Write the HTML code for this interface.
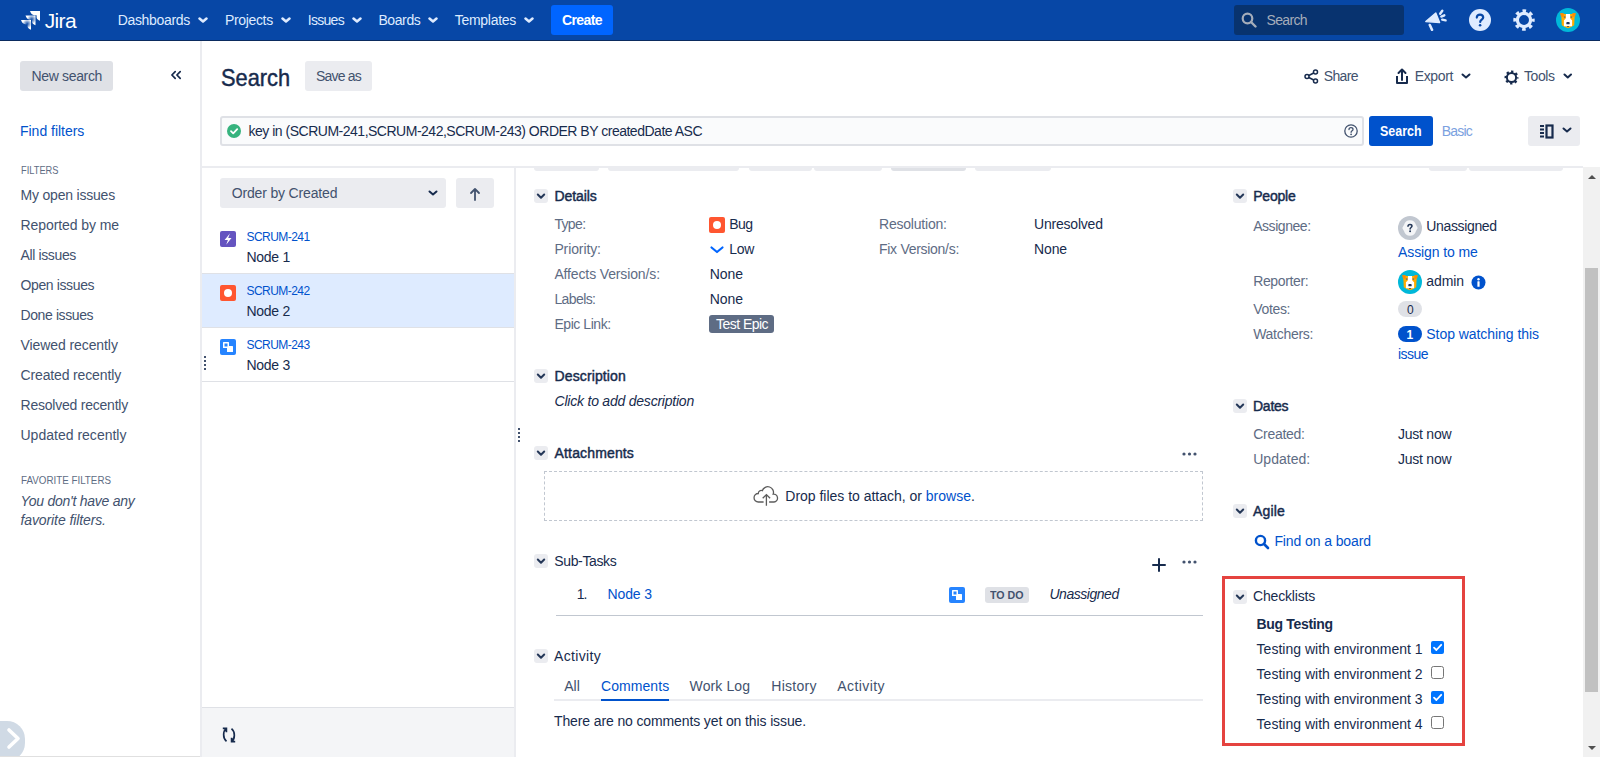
<!DOCTYPE html><html><head><meta charset="utf-8"><style>
html,body{margin:0;padding:0;width:1600px;height:757px;overflow:hidden;background:#fff;position:relative;font-family:"Liberation Sans", sans-serif}
.t{position:absolute;line-height:1;white-space:nowrap}
</style></head><body>
<div style="position:absolute;left:0px;top:0px;width:1600px;height:40px;background:#0747a6;border-radius:0px;"></div>
<div style="position:absolute;left:0px;top:40px;width:1600px;height:1px;background:#0b2b5e;border-radius:0px;"></div>
<svg style="position:absolute;left:20px;top:10px" width="21" height="22" viewBox="0 0 21 22">
<defs><radialGradient id="rg2" gradientUnits="userSpaceOnUse" cx="16.2" cy="4.8" r="4.6"><stop offset="0.1" stop-color="#fff" stop-opacity="0.15"/><stop offset="1" stop-color="#fff" stop-opacity="1"/></radialGradient>
<radialGradient id="rg3" gradientUnits="userSpaceOnUse" cx="16.2" cy="4.8" r="4.6"><stop offset="0.1" stop-color="#fff" stop-opacity="0.15"/><stop offset="1" stop-color="#fff" stop-opacity="1"/></radialGradient></defs>
<path transform="translate(-9 9)" d="M10 1.1 H20 V10.7 C18.5 10.3 16.8 9.3 16.6 7.5 V5.6 C16.6 5.4 16.4 5.2 16.2 5.2 H14.2 C12.5 5.2 10.5 3.3 10 1.1 Z" fill="url(#rg3)"/>
<path transform="translate(-4.5 4.5)" d="M10 1.1 H20 V10.7 C18.5 10.3 16.8 9.3 16.6 7.5 V5.6 C16.6 5.4 16.4 5.2 16.2 5.2 H14.2 C12.5 5.2 10.5 3.3 10 1.1 Z" fill="url(#rg2)"/>
<path d="M10 1.1 H20 V10.7 C18.5 10.3 16.8 9.3 16.6 7.5 V5.6 C16.6 5.4 16.4 5.2 16.2 5.2 H14.2 C12.5 5.2 10.5 3.3 10 1.1 Z" fill="#fff"/>
</svg>
<svg style="position:absolute;left:198px;top:16.5px" width="10" height="7.0" viewBox="0 0 10 7.0"><path d="M1.5 1.5 L5.0 4.5 L8.5 1.5" fill="none" stroke="#deebff" stroke-width="2.5" stroke-linecap="round" stroke-linejoin="round"/></svg>
<svg style="position:absolute;left:281px;top:16.5px" width="10" height="7.0" viewBox="0 0 10 7.0"><path d="M1.5 1.5 L5.0 4.5 L8.5 1.5" fill="none" stroke="#deebff" stroke-width="2.5" stroke-linecap="round" stroke-linejoin="round"/></svg>
<svg style="position:absolute;left:352px;top:16.5px" width="10" height="7.0" viewBox="0 0 10 7.0"><path d="M1.5 1.5 L5.0 4.5 L8.5 1.5" fill="none" stroke="#deebff" stroke-width="2.5" stroke-linecap="round" stroke-linejoin="round"/></svg>
<svg style="position:absolute;left:428px;top:16.5px" width="10" height="7.0" viewBox="0 0 10 7.0"><path d="M1.5 1.5 L5.0 4.5 L8.5 1.5" fill="none" stroke="#deebff" stroke-width="2.5" stroke-linecap="round" stroke-linejoin="round"/></svg>
<svg style="position:absolute;left:524px;top:16.5px" width="10" height="7.0" viewBox="0 0 10 7.0"><path d="M1.5 1.5 L5.0 4.5 L8.5 1.5" fill="none" stroke="#deebff" stroke-width="2.5" stroke-linecap="round" stroke-linejoin="round"/></svg>
<div style="position:absolute;left:551px;top:5px;width:62px;height:30px;background:#0065ff;border-radius:3px;"></div>
<div style="position:absolute;left:1234px;top:5px;width:170px;height:30px;background:#08336f;border-radius:3px;"></div>
<svg style="position:absolute;left:1241px;top:12px" width="16" height="16" viewBox="0 0 16 16"><circle cx="6.5" cy="6.5" r="4.8" fill="none" stroke="#a5adba" stroke-width="2.2"/><path d="M10 10 L14.5 14.5" stroke="#a5adba" stroke-width="2.4" stroke-linecap="round"/></svg>
<svg style="position:absolute;left:1424px;top:9px" width="24" height="22" viewBox="0 0 24 22"><path d="M1.8 12.6 L11.8 4 L15.6 13.6 Z" fill="#deebff" stroke="#deebff" stroke-width="1.4" stroke-linejoin="round"/>
<path d="M5.8 16 L8 20.8" stroke="#deebff" stroke-width="2.6" stroke-linecap="round"/>
<path d="M16.2 4.8 L18.3 1.8" stroke="#deebff" stroke-width="2.4" stroke-linecap="round"/><path d="M17.3 7.6 L20.3 6.3" stroke="#deebff" stroke-width="2.4" stroke-linecap="round"/><path d="M18.2 10.6 L21.6 11.4" stroke="#deebff" stroke-width="2.4" stroke-linecap="round"/></svg>
<svg style="position:absolute;left:1469px;top:9px" width="22" height="22" viewBox="0 0 22 22"><circle cx="11" cy="11" r="11" fill="#deebff"/><path d="M7.8 8.6 C7.8 6.6 9.2 5.6 11 5.6 C12.9 5.6 14.2 6.8 14.2 8.4 C14.2 10.6 11.2 10.6 11.2 13" fill="none" stroke="#0747a6" stroke-width="2.2" stroke-linecap="round"/><circle cx="11.1" cy="16.2" r="1.3" fill="#0747a6"/></svg>
<svg style="position:absolute;left:1513px;top:9px" width="22" height="22" viewBox="0 0 22 22"><circle cx="11" cy="11" r="6.6" fill="none" stroke="#deebff" stroke-width="3.1999999999999993"/><circle cx="11" cy="11" r="8.95" fill="none" stroke="#deebff" stroke-width="3.5" stroke-dasharray="3.515 3.515" stroke-dashoffset="1.757"/></svg>
<svg style="position:absolute;left:1556px;top:8px" width="24" height="24" viewBox="0 0 24 24"><circle cx="12" cy="12" r="12" fill="#00b8d9"/>
<path d="M5.2 6 H18.8 L18.2 17.2 L15.2 19 Q12 21.3 8.8 19 L5.8 17.2 Z" fill="#ffab00"/>
<path d="M4 5.2 L7.6 5 L7.6 9 L5 8.6 Z" fill="#ff8b00"/><path d="M20 5.2 L16.4 5 L16.4 9 L19 8.6 Z" fill="#ff8b00"/>
<path d="M10 6 H14 L14.4 10.8 L16.1 12.3 V18.2 H7.9 V12.3 L9.6 10.8 Z" fill="#fff"/>
<rect x="7.9" y="8.2" width="1.6" height="1.8" fill="#8a7a55"/><rect x="14.5" y="8.2" width="1.6" height="1.8" fill="#8a7a55"/>
<rect x="10.3" y="14.1" width="3.4" height="2.2" rx="0.9" fill="#253858"/><rect x="11.2" y="18" width="1.6" height="0.9" fill="#253858"/></svg>
<div style="position:absolute;left:200px;top:41px;width:2px;height:716px;background:#ebecf0;border-radius:0px;"></div>
<div style="position:absolute;left:20px;top:61px;width:93px;height:30px;background:#dfe1e6;border-radius:3px;"></div>
<svg style="position:absolute;left:170px;top:69px" width="13" height="12" viewBox="0 0 13 12"><path d="M5.2 2.7 L1.9 6 L5.2 9.3 M10.2 2.7 L6.9 6 L10.2 9.3" fill="none" stroke="#172b4d" stroke-width="1.7" stroke-linecap="round" stroke-linejoin="round"/></svg>
<div style="position:absolute;left:-20px;top:721px;width:45px;height:40px;background:#d0dae5;border-radius:18px;"></div>
<svg style="position:absolute;left:5px;top:726px" width="18" height="26" viewBox="0 0 18 26"><path d="M4 4 L13 12.5 L4 21" fill="none" stroke="#fff" stroke-width="3.6" stroke-linecap="round" stroke-linejoin="round"/></svg>
<div style="position:absolute;left:0px;top:756px;width:200px;height:1px;background:#e0e0e0;border-radius:0px;"></div>
<div style="position:absolute;left:305px;top:61px;width:67px;height:30px;background:#ebecf0;border-radius:3px;"></div>
<svg style="position:absolute;left:1304px;top:69px" width="15" height="15" viewBox="0 0 15 15"><circle cx="11.5" cy="3" r="2" fill="none" stroke="#172b4d" stroke-width="1.5"/><circle cx="3" cy="7.5" r="2" fill="none" stroke="#172b4d" stroke-width="1.5"/><circle cx="11.5" cy="12" r="2" fill="none" stroke="#172b4d" stroke-width="1.5"/><path d="M4.8 6.5 L9.7 4 M4.8 8.5 L9.7 11" stroke="#172b4d" stroke-width="1.5"/></svg>
<svg style="position:absolute;left:1395px;top:68px" width="14" height="17" viewBox="0 0 14 17"><path d="M2 8 V15 H12 V8" fill="none" stroke="#172b4d" stroke-width="2" stroke-linejoin="round"/><path d="M7 12 V2 M3.5 5 L7 1.5 L10.5 5" fill="none" stroke="#172b4d" stroke-width="2" stroke-linecap="round" stroke-linejoin="round"/></svg>
<svg style="position:absolute;left:1461px;top:73px" width="10" height="7" viewBox="0 0 10 7"><path d="M1.5 1.5 L5.0 4.5 L8.5 1.5" fill="none" stroke="#172b4d" stroke-width="2" stroke-linecap="round" stroke-linejoin="round"/></svg>
<svg style="position:absolute;left:1504px;top:70px" width="15" height="15" viewBox="0 0 15 15"><circle cx="7.5" cy="7.5" r="4.6" fill="none" stroke="#172b4d" stroke-width="1.9999999999999996"/><circle cx="7.5" cy="7.5" r="5.8" fill="none" stroke="#172b4d" stroke-width="2.4000000000000004" stroke-dasharray="2.278 2.278" stroke-dashoffset="1.139"/></svg>
<svg style="position:absolute;left:1562.5px;top:73px" width="9.5" height="7" viewBox="0 0 9.5 7"><path d="M1.5 1.5 L4.75 4.5 L8.0 1.5" fill="none" stroke="#172b4d" stroke-width="2" stroke-linecap="round" stroke-linejoin="round"/></svg>
<div style="position:absolute;left:220px;top:116px;width:1144px;height:30px;background:#fafbfc;border-radius:3px;box-sizing:border-box;border:2px solid #dfe1e6"></div>
<svg style="position:absolute;left:227px;top:124px" width="14" height="14" viewBox="0 0 14 14"><circle cx="7" cy="7" r="7" fill="#36b37e"/><path d="M4 7.2 L6.2 9.3 L10.2 5.2" fill="none" stroke="#fff" stroke-width="1.8" stroke-linecap="round" stroke-linejoin="round"/></svg>
<svg style="position:absolute;left:1344px;top:124px" width="14" height="14" viewBox="0 0 14 14"><circle cx="7" cy="7" r="6.2" fill="none" stroke="#42526e" stroke-width="1.3"/><path d="M5 5.6 C5 4.3 5.9 3.7 7 3.7 C8.2 3.7 9 4.4 9 5.4 C9 6.8 7.1 6.8 7.1 8.3" fill="none" stroke="#42526e" stroke-width="1.3" stroke-linecap="round"/><circle cx="7.1" cy="10.3" r="0.9" fill="#42526e"/></svg>
<div style="position:absolute;left:1369px;top:116px;width:64px;height:30px;background:#0052cc;border-radius:3px;"></div>
<div style="position:absolute;left:1528px;top:116px;width:52px;height:30px;background:#ebecf0;border-radius:3px;"></div>
<svg style="position:absolute;left:1539px;top:124px" width="16" height="15" viewBox="0 0 16 15"><path d="M1 2 H5 M1 5.5 H5 M1 9 H5 M1 12.5 H5" stroke="#172b4d" stroke-width="1.8"/><rect x="7.5" y="1.5" width="6" height="12" fill="none" stroke="#172b4d" stroke-width="2.2"/></svg>
<svg style="position:absolute;left:1562px;top:127px" width="10" height="7" viewBox="0 0 10 7"><path d="M1.5 1.5 L5.0 4.5 L8.5 1.5" fill="none" stroke="#172b4d" stroke-width="2" stroke-linecap="round" stroke-linejoin="round"/></svg>
<div style="position:absolute;left:202px;top:166px;width:1381px;height:2px;background:#ebecf0;border-radius:0px;"></div>
<div style="position:absolute;left:220px;top:178px;width:226px;height:30px;background:#ebecf0;border-radius:3px;"></div>
<svg style="position:absolute;left:428px;top:189.5px" width="10" height="7.0" viewBox="0 0 10 7.0"><path d="M1.5 1.5 L5.0 4.5 L8.5 1.5" fill="none" stroke="#172b4d" stroke-width="2" stroke-linecap="round" stroke-linejoin="round"/></svg>
<div style="position:absolute;left:456px;top:178px;width:38px;height:30px;background:#ebecf0;border-radius:3px;"></div>
<svg style="position:absolute;left:468px;top:187px" width="14" height="14" viewBox="0 0 14 14"><path d="M7 13 V2 M3 6 L7 2 L11 6" fill="none" stroke="#42526e" stroke-width="1.8" stroke-linecap="round" stroke-linejoin="round"/></svg>
<div style="position:absolute;left:202px;top:273px;width:312px;height:1px;background:#dfe1e6;border-radius:0px;"></div>
<div style="position:absolute;left:202px;top:274px;width:312px;height:53px;background:#deebff;border-radius:0px;"></div>
<div style="position:absolute;left:202px;top:327px;width:312px;height:1px;background:#dfe1e6;border-radius:0px;"></div>
<div style="position:absolute;left:202px;top:381px;width:312px;height:1px;background:#dfe1e6;border-radius:0px;"></div>
<svg style="position:absolute;left:220px;top:231px" width="16" height="16" viewBox="0 0 16 16"><rect width="16" height="16" rx="2" fill="#6554c0"/><path d="M9.9 2.4 L4.6 9.1 H7.9 L6.2 13.8 L11.5 7 H8.2 Z" fill="#fff"/></svg>
<svg style="position:absolute;left:220px;top:285px" width="16" height="16" viewBox="0 0 16 16"><rect width="16" height="16" rx="2" fill="#ff5630"/><circle cx="8" cy="8" r="4" fill="#fff"/></svg>
<svg style="position:absolute;left:220px;top:339px" width="16" height="16" viewBox="0 0 16 16"><rect width="16" height="16" rx="2" fill="#2684ff"/><rect x="3" y="3" width="6" height="6" rx="0.5" fill="#fff"/><rect x="7" y="7" width="6" height="6" rx="0.5" fill="#fff"/><rect x="4.5" y="4.5" width="3" height="3" fill="#2684ff"/></svg>
<div style="position:absolute;left:204px;top:356px;width:2px;height:2px;background:#42526e;border-radius:0px;"></div>
<div style="position:absolute;left:204px;top:360px;width:2px;height:2px;background:#42526e;border-radius:0px;"></div>
<div style="position:absolute;left:204px;top:364px;width:2px;height:2px;background:#42526e;border-radius:0px;"></div>
<div style="position:absolute;left:204px;top:368px;width:2px;height:2px;background:#42526e;border-radius:0px;"></div>
<div style="position:absolute;left:514px;top:167px;width:2px;height:590px;background:#ebecf0;border-radius:0px;"></div>
<div style="position:absolute;left:518px;top:428px;width:2px;height:2px;background:#42526e;border-radius:0px;"></div>
<div style="position:absolute;left:518px;top:432px;width:2px;height:2px;background:#42526e;border-radius:0px;"></div>
<div style="position:absolute;left:518px;top:436px;width:2px;height:2px;background:#42526e;border-radius:0px;"></div>
<div style="position:absolute;left:518px;top:440px;width:2px;height:2px;background:#42526e;border-radius:0px;"></div>
<div style="position:absolute;left:202px;top:707px;width:312px;height:1px;background:#dfe1e6;border-radius:0px;"></div>
<div style="position:absolute;left:202px;top:708px;width:312px;height:49px;background:#f4f5f7;border-radius:0px;"></div>
<svg style="position:absolute;left:221px;top:727px" width="16" height="16" viewBox="0 0 16 16"><path d="M5.3 1.8 C2 4 1.5 11 5.5 14.3 M1.8 1.4 H5.4 V5.2" fill="none" stroke="#172b4d" stroke-width="1.7" stroke-linejoin="miter"/><path d="M10.7 14.2 C14 12 14.5 5 10.5 1.7 M14.2 14.6 H10.6 V10.8" fill="none" stroke="#172b4d" stroke-width="1.7" stroke-linejoin="miter"/></svg>
<div style="position:absolute;left:534px;top:163px;width:65px;height:8px;background:#ebecf0;border-radius:3px;"></div>
<div style="position:absolute;left:608px;top:163px;width:131px;height:8px;background:#ebecf0;border-radius:3px;"></div>
<div style="position:absolute;left:749px;top:163px;width:63px;height:8px;background:#ebecf0;border-radius:3px;"></div>
<div style="position:absolute;left:814px;top:163px;width:68px;height:8px;background:#ebecf0;border-radius:3px;"></div>
<div style="position:absolute;left:891px;top:163px;width:75px;height:8px;background:#dfe1e6;border-radius:3px;"></div>
<div style="position:absolute;left:975px;top:163px;width:76px;height:8px;background:#ebecf0;border-radius:3px;"></div>
<div style="position:absolute;left:1429px;top:163px;width:38px;height:8px;background:#ebecf0;border-radius:3px;"></div>
<div style="position:absolute;left:1469px;top:163px;width:94px;height:8px;background:#ebecf0;border-radius:3px;"></div>
<div style="position:absolute;left:202px;top:166px;width:1381px;height:2px;background:#ebecf0;border-radius:0px;"></div>
<div style="position:absolute;left:202px;top:163px;width:1398px;height:3px;background:#fff;border-radius:0px;"></div>
<div style="position:absolute;left:534px;top:189px;width:14px;height:14px;background:#ebecf0;border-radius:3px;"></div>
<svg style="position:absolute;left:534px;top:189px" width="14" height="14" viewBox="0 0 14 14"><path d="M3.8 5.5 L7 8.7 L10.2 5.5" fill="none" stroke="#253858" stroke-width="2" stroke-linecap="round" stroke-linejoin="round"/></svg>
<svg style="position:absolute;left:709px;top:217px" width="16" height="16" viewBox="0 0 16 16"><rect width="16" height="16" rx="2" fill="#ff5630"/><circle cx="8" cy="8" r="4" fill="#fff"/></svg>
<svg style="position:absolute;left:709px;top:245px" width="16" height="10" viewBox="0 0 16 10"><path d="M2.5 2.5 L8 7 L13.5 2.5" fill="none" stroke="#0065ff" stroke-width="2.2" stroke-linecap="round" stroke-linejoin="round"/></svg>
<div style="position:absolute;left:709px;top:315px;width:65px;height:18px;background:#5e6c84;border-radius:3px;"></div>
<div style="position:absolute;left:534px;top:369px;width:14px;height:14px;background:#ebecf0;border-radius:3px;"></div>
<svg style="position:absolute;left:534px;top:369px" width="14" height="14" viewBox="0 0 14 14"><path d="M3.8 5.5 L7 8.7 L10.2 5.5" fill="none" stroke="#253858" stroke-width="2" stroke-linecap="round" stroke-linejoin="round"/></svg>
<div style="position:absolute;left:534px;top:446px;width:14px;height:14px;background:#ebecf0;border-radius:3px;"></div>
<svg style="position:absolute;left:534px;top:446px" width="14" height="14" viewBox="0 0 14 14"><path d="M3.8 5.5 L7 8.7 L10.2 5.5" fill="none" stroke="#253858" stroke-width="2" stroke-linecap="round" stroke-linejoin="round"/></svg>
<svg style="position:absolute;left:1182px;top:451px" width="16" height="6" viewBox="0 0 16 6"><circle cx="2" cy="3" r="1.6" fill="#42526e"/><circle cx="7.5" cy="3" r="1.6" fill="#42526e"/><circle cx="13" cy="3" r="1.6" fill="#42526e"/></svg>
<div style="position:absolute;left:544px;top:471px;width:659px;height:50px;background:transparent;border-radius:0px;box-sizing:border-box;border:1px dashed #c1c7d0"></div>
<svg style="position:absolute;left:753px;top:485px" width="27" height="22" viewBox="0 0 27 22"><path d="M10.6 17 H5.3 A4.25 4.25 0 0 1 5.3 8.5 A3 3 0 0 1 9.4 5.6 A5.6 5.6 0 0 1 20.2 9.2 A3.9 3.9 0 0 1 21 17 H16.1" fill="none" stroke="#5c5c5c" stroke-width="1.3"/><path d="M13.4 20.8 V9.8 M9.7 13.3 L13.4 9.6 L17.1 13.3" fill="none" stroke="#5c5c5c" stroke-width="1.3" stroke-linejoin="miter"/></svg>
<div style="position:absolute;left:534px;top:554px;width:14px;height:14px;background:#ebecf0;border-radius:3px;"></div>
<svg style="position:absolute;left:534px;top:554px" width="14" height="14" viewBox="0 0 14 14"><path d="M3.8 5.5 L7 8.7 L10.2 5.5" fill="none" stroke="#253858" stroke-width="2" stroke-linecap="round" stroke-linejoin="round"/></svg>
<svg style="position:absolute;left:1151px;top:557px" width="16" height="16" viewBox="0 0 16 16"><path d="M8 2 V14 M2 8 H14" stroke="#172b4d" stroke-width="2" stroke-linecap="round"/></svg>
<svg style="position:absolute;left:1182px;top:559px" width="16" height="6" viewBox="0 0 16 6"><circle cx="2" cy="3" r="1.6" fill="#42526e"/><circle cx="7.5" cy="3" r="1.6" fill="#42526e"/><circle cx="13" cy="3" r="1.6" fill="#42526e"/></svg>
<svg style="position:absolute;left:949px;top:587px" width="16" height="16" viewBox="0 0 16 16"><rect width="16" height="16" rx="2" fill="#2684ff"/><rect x="3" y="3" width="6" height="6" rx="0.5" fill="#fff"/><rect x="7" y="7" width="6" height="6" rx="0.5" fill="#fff"/><rect x="4.5" y="4.5" width="3" height="3" fill="#2684ff"/></svg>
<div style="position:absolute;left:985px;top:587px;width:44px;height:16px;background:#dfe1e6;border-radius:3px;"></div>
<div style="position:absolute;left:556px;top:615px;width:647px;height:1px;background:#c1c7d0;border-radius:0px;"></div>
<div style="position:absolute;left:534px;top:649px;width:14px;height:14px;background:#ebecf0;border-radius:3px;"></div>
<svg style="position:absolute;left:534px;top:649px" width="14" height="14" viewBox="0 0 14 14"><path d="M3.8 5.5 L7 8.7 L10.2 5.5" fill="none" stroke="#253858" stroke-width="2" stroke-linecap="round" stroke-linejoin="round"/></svg>
<div style="position:absolute;left:554px;top:699px;width:649px;height:2px;background:#ebecf0;border-radius:0px;"></div>
<div style="position:absolute;left:601px;top:699px;width:68px;height:2px;background:#0052cc;border-radius:0px;"></div>
<div style="position:absolute;left:1233px;top:189px;width:14px;height:14px;background:#ebecf0;border-radius:3px;"></div>
<svg style="position:absolute;left:1233px;top:189px" width="14" height="14" viewBox="0 0 14 14"><path d="M3.8 5.5 L7 8.7 L10.2 5.5" fill="none" stroke="#253858" stroke-width="2" stroke-linecap="round" stroke-linejoin="round"/></svg>
<svg style="position:absolute;left:1398px;top:216px" width="24" height="24" viewBox="0 0 24 24"><circle cx="12" cy="12" r="12" fill="#c1c7d0"/><path d="M12 4.2 C15.2 4.2 17.3 6.2 17.9 8.8 L19.7 12 L17.9 15.2 C17.3 17.8 15.2 19.8 12 19.8 C8.8 19.8 6.7 17.8 6.1 15.2 L4.3 12 L6.1 8.8 C6.7 6.2 8.8 4.2 12 4.2Z" fill="#f4f5f7"/><path d="M10 10.2 C10 9 10.9 8.4 12 8.4 C13.2 8.4 14 9.1 14 10.1 C14 11.5 12.1 11.5 12.1 13" fill="none" stroke="#253858" stroke-width="1.5" stroke-linecap="round"/><circle cx="12.1" cy="15.3" r="0.95" fill="#253858"/></svg>
<svg style="position:absolute;left:1398px;top:270px" width="24" height="24" viewBox="0 0 24 24"><circle cx="12" cy="12" r="12" fill="#00b8d9"/>
<path d="M5.2 6 H18.8 L18.2 17.2 L15.2 19 Q12 21.3 8.8 19 L5.8 17.2 Z" fill="#ffab00"/>
<path d="M4 5.2 L7.6 5 L7.6 9 L5 8.6 Z" fill="#ff8b00"/><path d="M20 5.2 L16.4 5 L16.4 9 L19 8.6 Z" fill="#ff8b00"/>
<path d="M10 6 H14 L14.4 10.8 L16.1 12.3 V18.2 H7.9 V12.3 L9.6 10.8 Z" fill="#fff"/>
<rect x="7.9" y="8.2" width="1.6" height="1.8" fill="#8a7a55"/><rect x="14.5" y="8.2" width="1.6" height="1.8" fill="#8a7a55"/>
<rect x="10.3" y="14.1" width="3.4" height="2.2" rx="0.9" fill="#253858"/><rect x="11.2" y="18" width="1.6" height="0.9" fill="#253858"/></svg>
<svg style="position:absolute;left:1471px;top:275px" width="15" height="15" viewBox="0 0 15 15"><circle cx="7.5" cy="7.5" r="7" fill="#0052cc"/><circle cx="7.5" cy="4.3" r="1.2" fill="#fff"/><rect x="6.4" y="6.3" width="2.2" height="5.5" rx="0.5" fill="#fff"/></svg>
<div style="position:absolute;left:1398px;top:301px;width:24px;height:16px;background:#dfe1e6;border-radius:8px;"></div>
<div style="position:absolute;left:1398px;top:326px;width:24px;height:16px;background:#0052cc;border-radius:8px;"></div>
<div style="position:absolute;left:1233px;top:399px;width:14px;height:14px;background:#ebecf0;border-radius:3px;"></div>
<svg style="position:absolute;left:1233px;top:399px" width="14" height="14" viewBox="0 0 14 14"><path d="M3.8 5.5 L7 8.7 L10.2 5.5" fill="none" stroke="#253858" stroke-width="2" stroke-linecap="round" stroke-linejoin="round"/></svg>
<div style="position:absolute;left:1233px;top:504px;width:14px;height:14px;background:#ebecf0;border-radius:3px;"></div>
<svg style="position:absolute;left:1233px;top:504px" width="14" height="14" viewBox="0 0 14 14"><path d="M3.8 5.5 L7 8.7 L10.2 5.5" fill="none" stroke="#253858" stroke-width="2" stroke-linecap="round" stroke-linejoin="round"/></svg>
<svg style="position:absolute;left:1254px;top:534px" width="16" height="16" viewBox="0 0 16 16"><circle cx="6.5" cy="6.5" r="4.6" fill="none" stroke="#0052cc" stroke-width="2.4"/><path d="M10 10 L14 14" stroke="#0052cc" stroke-width="2.6" stroke-linecap="round"/></svg>
<div style="position:absolute;left:1222px;top:576px;width:243px;height:170px;background:transparent;border-radius:0px;box-sizing:border-box;border:3px solid #e5433f"></div>
<div style="position:absolute;left:1233px;top:590px;width:14px;height:14px;background:#ebecf0;border-radius:3px;"></div>
<svg style="position:absolute;left:1233px;top:590px" width="14" height="14" viewBox="0 0 14 14"><path d="M3.8 5.5 L7 8.7 L10.2 5.5" fill="none" stroke="#253858" stroke-width="2" stroke-linecap="round" stroke-linejoin="round"/></svg>
<svg style="position:absolute;left:1431px;top:641px" width="13" height="13" viewBox="0 0 13 13"><rect x="0" y="0" width="13" height="13" rx="2" fill="#0075ff"/><path d="M3 6.6 L5.4 9 L10.2 3.8" fill="none" stroke="#fff" stroke-width="1.8" stroke-linecap="round" stroke-linejoin="round"/></svg>
<svg style="position:absolute;left:1431px;top:666px" width="13" height="13" viewBox="0 0 13 13"><rect x="0.5" y="0.5" width="12" height="12" rx="2" fill="#fff" stroke="#767676" stroke-width="1"/></svg>
<svg style="position:absolute;left:1431px;top:691px" width="13" height="13" viewBox="0 0 13 13"><rect x="0" y="0" width="13" height="13" rx="2" fill="#0075ff"/><path d="M3 6.6 L5.4 9 L10.2 3.8" fill="none" stroke="#fff" stroke-width="1.8" stroke-linecap="round" stroke-linejoin="round"/></svg>
<svg style="position:absolute;left:1431px;top:716px" width="13" height="13" viewBox="0 0 13 13"><rect x="0.5" y="0.5" width="12" height="12" rx="2" fill="#fff" stroke="#767676" stroke-width="1"/></svg>
<div style="position:absolute;left:1583px;top:167px;width:17px;height:590px;background:#f1f1f1;border-radius:0px;"></div>
<div style="position:absolute;left:1585px;top:268px;width:13px;height:424px;background:#c1c1c1;border-radius:0px;"></div>
<svg style="position:absolute;left:1587px;top:173px" width="10" height="8" viewBox="0 0 10 8"><path d="M1 6 L5 2 L9 6 Z" fill="#505050"/></svg>
<svg style="position:absolute;left:1587px;top:744px" width="10" height="8" viewBox="0 0 10 8"><path d="M1 2 L5 6 L9 2 Z" fill="#505050"/></svg>
<div class="t" style="left:44.7px;top:10.22px;font-size:21px;color:#fff;font-weight:400;font-style:normal;letter-spacing:-0.636px;">Jira</div>
<div class="t" style="left:117.7px;top:13.15px;font-size:14px;color:#deebff;font-weight:400;font-style:normal;letter-spacing:-0.320px;">Dashboards</div>
<div class="t" style="left:225px;top:13.15px;font-size:14px;color:#deebff;font-weight:400;font-style:normal;letter-spacing:-0.347px;">Projects</div>
<div class="t" style="left:307.7px;top:13.15px;font-size:14px;color:#deebff;font-weight:400;font-style:normal;letter-spacing:-0.695px;">Issues</div>
<div class="t" style="left:378.4px;top:13.15px;font-size:14px;color:#deebff;font-weight:400;font-style:normal;letter-spacing:-0.393px;">Boards</div>
<div class="t" style="left:454.7px;top:13.15px;font-size:14px;color:#deebff;font-weight:400;font-style:normal;letter-spacing:-0.279px;">Templates</div>
<div class="t" style="left:562px;top:13.15px;font-size:14px;color:#fff;font-weight:700;font-style:normal;letter-spacing:-0.599px;">Create</div>
<div class="t" style="left:1266.5px;top:13.15px;font-size:14px;color:#a5adba;font-weight:400;font-style:normal;letter-spacing:-0.643px;">Search</div>
<div class="t" style="left:31.5px;top:69.15px;font-size:14px;color:#42526e;font-weight:400;font-style:normal;letter-spacing:-0.342px;">New search</div>
<div class="t" style="left:20px;top:124.15px;font-size:14px;color:#0052cc;font-weight:400;font-style:normal;letter-spacing:-0.023px;">Find filters</div>
<div class="t" style="left:20.5px;top:164.69px;font-size:11px;color:#5e6c84;font-weight:400;font-style:normal;transform:scaleX(0.8442);transform-origin:0 0;">FILTERS</div>
<div class="t" style="left:20.5px;top:188.15px;font-size:14px;color:#42526e;font-weight:400;font-style:normal;letter-spacing:-0.199px;">My open issues</div>
<div class="t" style="left:20.5px;top:218.15px;font-size:14px;color:#42526e;font-weight:400;font-style:normal;letter-spacing:-0.079px;">Reported by me</div>
<div class="t" style="left:20.5px;top:248.15px;font-size:14px;color:#42526e;font-weight:400;font-style:normal;letter-spacing:-0.364px;">All issues</div>
<div class="t" style="left:20.5px;top:278.15px;font-size:14px;color:#42526e;font-weight:400;font-style:normal;letter-spacing:-0.375px;">Open issues</div>
<div class="t" style="left:20.5px;top:308.15px;font-size:14px;color:#42526e;font-weight:400;font-style:normal;letter-spacing:-0.395px;">Done issues</div>
<div class="t" style="left:20.5px;top:338.15px;font-size:14px;color:#42526e;font-weight:400;font-style:normal;letter-spacing:-0.085px;">Viewed recently</div>
<div class="t" style="left:20.5px;top:368.15px;font-size:14px;color:#42526e;font-weight:400;font-style:normal;letter-spacing:-0.139px;">Created recently</div>
<div class="t" style="left:20.5px;top:398.15px;font-size:14px;color:#42526e;font-weight:400;font-style:normal;letter-spacing:-0.222px;">Resolved recently</div>
<div class="t" style="left:20.5px;top:428.15px;font-size:14px;color:#42526e;font-weight:400;font-style:normal;letter-spacing:0.010px;">Updated recently</div>
<div class="t" style="left:20.5px;top:474.69px;font-size:11px;color:#5e6c84;font-weight:400;font-style:normal;transform:scaleX(0.8905);transform-origin:0 0;">FAVORITE FILTERS</div>
<div class="t" style="left:20.5px;top:494.15px;font-size:14px;color:#42526e;font-weight:400;font-style:italic;letter-spacing:-0.260px;">You don&#39;t have any</div>
<div class="t" style="left:20.5px;top:513.15px;font-size:14px;color:#42526e;font-weight:400;font-style:italic;letter-spacing:-0.102px;">favorite filters.</div>
<div class="t" style="left:221px;top:65.68px;font-size:24px;color:#172b4d;font-weight:400;font-style:normal;transform:scaleX(0.9073);transform-origin:0 0;-webkit-text-stroke:0.45px #172b4d;">Search</div>
<div class="t" style="left:316px;top:69.15px;font-size:14px;color:#42526e;font-weight:400;font-style:normal;letter-spacing:-0.799px;">Save as</div>
<div class="t" style="left:1323.7px;top:69.15px;font-size:14px;color:#42526e;font-weight:400;font-style:normal;letter-spacing:-0.612px;">Share</div>
<div class="t" style="left:1414.7px;top:69.15px;font-size:14px;color:#42526e;font-weight:400;font-style:normal;letter-spacing:-0.361px;">Export</div>
<div class="t" style="left:1524px;top:69.15px;font-size:14px;color:#42526e;font-weight:400;font-style:normal;letter-spacing:-0.438px;">Tools</div>
<div class="t" style="left:248.5px;top:124.15px;font-size:14px;color:#172b4d;font-weight:400;font-style:normal;letter-spacing:-0.491px;">key in (SCRUM-241,SCRUM-242,SCRUM-243) ORDER BY createdDate ASC</div>
<div class="t" style="left:1380.4px;top:124.15px;font-size:14px;color:#fff;font-weight:700;font-style:normal;transform:scaleX(0.8907);transform-origin:0 0;">Search</div>
<div class="t" style="left:1441.7px;top:124.15px;font-size:14px;color:#7ba1e0;font-weight:400;font-style:normal;letter-spacing:-0.787px;">Basic</div>
<div class="t" style="left:231.7px;top:186.15px;font-size:14px;color:#42526e;font-weight:400;font-style:normal;letter-spacing:-0.161px;">Order by Created</div>
<div class="t" style="left:246.5px;top:230.84px;font-size:12px;color:#0052cc;font-weight:400;font-style:normal;letter-spacing:-0.557px;">SCRUM-241</div>
<div class="t" style="left:246.5px;top:250.15px;font-size:14px;color:#172b4d;font-weight:400;font-style:normal;letter-spacing:-0.276px;">Node 1</div>
<div class="t" style="left:246.5px;top:284.84px;font-size:12px;color:#0052cc;font-weight:400;font-style:normal;letter-spacing:-0.557px;">SCRUM-242</div>
<div class="t" style="left:246.5px;top:304.15px;font-size:14px;color:#172b4d;font-weight:400;font-style:normal;letter-spacing:-0.276px;">Node 2</div>
<div class="t" style="left:246.5px;top:338.84px;font-size:12px;color:#0052cc;font-weight:400;font-style:normal;letter-spacing:-0.557px;">SCRUM-243</div>
<div class="t" style="left:246.5px;top:358.15px;font-size:14px;color:#172b4d;font-weight:400;font-style:normal;letter-spacing:-0.276px;">Node 3</div>
<div class="t" style="left:554.5px;top:189.15px;font-size:14px;color:#172b4d;font-weight:400;font-style:normal;letter-spacing:-0.071px;-webkit-text-stroke:0.45px #172b4d;">Details</div>
<div class="t" style="left:554.4px;top:217.15px;font-size:14px;color:#5e6c84;font-weight:400;font-style:normal;letter-spacing:-0.650px;">Type:</div>
<div class="t" style="left:554.4px;top:242.15px;font-size:14px;color:#5e6c84;font-weight:400;font-style:normal;letter-spacing:-0.106px;">Priority:</div>
<div class="t" style="left:554.4px;top:267.15px;font-size:14px;color:#5e6c84;font-weight:400;font-style:normal;letter-spacing:-0.134px;">Affects Version/s:</div>
<div class="t" style="left:554.4px;top:292.15px;font-size:14px;color:#5e6c84;font-weight:400;font-style:normal;letter-spacing:-0.594px;">Labels:</div>
<div class="t" style="left:554.4px;top:317.15px;font-size:14px;color:#5e6c84;font-weight:400;font-style:normal;letter-spacing:-0.440px;">Epic Link:</div>
<div class="t" style="left:729.2px;top:217.15px;font-size:14px;color:#172b4d;font-weight:400;font-style:normal;letter-spacing:-0.507px;">Bug</div>
<div class="t" style="left:729.2px;top:242.15px;font-size:14px;color:#172b4d;font-weight:400;font-style:normal;letter-spacing:-0.296px;">Low</div>
<div class="t" style="left:709.8px;top:267.15px;font-size:14px;color:#172b4d;font-weight:400;font-style:normal;letter-spacing:-0.117px;">None</div>
<div class="t" style="left:709.8px;top:292.15px;font-size:14px;color:#172b4d;font-weight:400;font-style:normal;letter-spacing:-0.117px;">None</div>
<div class="t" style="left:716px;top:317.15px;font-size:14px;color:#fff;font-weight:400;font-style:normal;letter-spacing:-0.535px;">Test Epic</div>
<div class="t" style="left:879px;top:217.15px;font-size:14px;color:#5e6c84;font-weight:400;font-style:normal;letter-spacing:-0.213px;">Resolution:</div>
<div class="t" style="left:879px;top:242.15px;font-size:14px;color:#5e6c84;font-weight:400;font-style:normal;letter-spacing:-0.288px;">Fix Version/s:</div>
<div class="t" style="left:1034px;top:217.15px;font-size:14px;color:#172b4d;font-weight:400;font-style:normal;letter-spacing:-0.203px;">Unresolved</div>
<div class="t" style="left:1034px;top:242.15px;font-size:14px;color:#172b4d;font-weight:400;font-style:normal;letter-spacing:-0.117px;">None</div>
<div class="t" style="left:554.6px;top:369.15px;font-size:14px;color:#172b4d;font-weight:400;font-style:normal;letter-spacing:0.106px;-webkit-text-stroke:0.45px #172b4d;">Description</div>
<div class="t" style="left:554.6px;top:394.15px;font-size:14px;color:#172b4d;font-weight:400;font-style:italic;letter-spacing:-0.223px;">Click to add description</div>
<div class="t" style="left:554.6px;top:446.15px;font-size:14px;color:#172b4d;font-weight:400;font-style:normal;letter-spacing:0.143px;-webkit-text-stroke:0.45px #172b4d;">Attachments</div>
<div class="t" style="left:785.3px;top:489.15px;font-size:14px;color:#172b4d;font-weight:400;font-style:normal;letter-spacing:-0.012px;">Drop files to attach, or <span style="color:#0052cc">browse</span>.</div>
<div class="t" style="left:554.3px;top:554.15px;font-size:14px;color:#172b4d;font-weight:400;font-style:normal;letter-spacing:-0.373px;">Sub-Tasks</div>
<div class="t" style="left:576.7px;top:587.15px;font-size:14px;color:#172b4d;font-weight:400;font-style:normal;letter-spacing:-0.994px;">1.</div>
<div class="t" style="left:607.6px;top:587.15px;font-size:14px;color:#0052cc;font-weight:400;font-style:normal;letter-spacing:-0.159px;">Node 3</div>
<div class="t" style="left:990.4px;top:589.69px;font-size:11px;color:#42526e;font-weight:700;font-style:normal;transform:scaleX(0.9671);transform-origin:0 0;">TO DO</div>
<div class="t" style="left:1049.4px;top:587.15px;font-size:14px;color:#172b4d;font-weight:400;font-style:italic;letter-spacing:-0.454px;">Unassigned</div>
<div class="t" style="left:554px;top:649.15px;font-size:14px;color:#172b4d;font-weight:400;font-style:normal;letter-spacing:0.332px;">Activity</div>
<div class="t" style="left:564.2px;top:679.15px;font-size:14px;color:#42526e;font-weight:400;font-style:normal;letter-spacing:0.079px;">All</div>
<div class="t" style="left:601px;top:679.15px;font-size:14px;color:#0052cc;font-weight:400;font-style:normal;letter-spacing:0.064px;">Comments</div>
<div class="t" style="left:689.6px;top:679.15px;font-size:14px;color:#42526e;font-weight:400;font-style:normal;letter-spacing:0.116px;">Work Log</div>
<div class="t" style="left:771.3px;top:679.15px;font-size:14px;color:#42526e;font-weight:400;font-style:normal;letter-spacing:0.262px;">History</div>
<div class="t" style="left:837.3px;top:679.15px;font-size:14px;color:#42526e;font-weight:400;font-style:normal;letter-spacing:0.407px;">Activity</div>
<div class="t" style="left:554px;top:714.15px;font-size:14px;color:#172b4d;font-weight:400;font-style:normal;letter-spacing:-0.120px;">There are no comments yet on this issue.</div>
<div class="t" style="left:1253.2px;top:189.15px;font-size:14px;color:#172b4d;font-weight:400;font-style:normal;letter-spacing:-0.216px;-webkit-text-stroke:0.45px #172b4d;">People</div>
<div class="t" style="left:1253.2px;top:219.15px;font-size:14px;color:#5e6c84;font-weight:400;font-style:normal;letter-spacing:-0.454px;">Assignee:</div>
<div class="t" style="left:1426.3px;top:219.15px;font-size:14px;color:#172b4d;font-weight:400;font-style:normal;letter-spacing:-0.354px;">Unassigned</div>
<div class="t" style="left:1398px;top:245.15px;font-size:14px;color:#0052cc;font-weight:400;font-style:normal;letter-spacing:-0.103px;">Assign to me</div>
<div class="t" style="left:1253.2px;top:274.15px;font-size:14px;color:#5e6c84;font-weight:400;font-style:normal;letter-spacing:-0.373px;">Reporter:</div>
<div class="t" style="left:1426.3px;top:274.15px;font-size:14px;color:#172b4d;font-weight:400;font-style:normal;letter-spacing:-0.088px;">admin</div>
<div class="t" style="left:1253.2px;top:302.15px;font-size:14px;color:#5e6c84;font-weight:400;font-style:normal;letter-spacing:-0.320px;">Votes:</div>
<div class="t" style="left:1407px;top:303.84px;font-size:12px;color:#172b4d;font-weight:400;font-style:normal;letter-spacing:-0.188px;">0</div>
<div class="t" style="left:1253.2px;top:327.15px;font-size:14px;color:#5e6c84;font-weight:400;font-style:normal;letter-spacing:-0.278px;">Watchers:</div>
<div class="t" style="left:1406.5px;top:328.84px;font-size:12px;color:#fff;font-weight:700;font-style:normal;letter-spacing:-0.688px;">1</div>
<div class="t" style="left:1426.3px;top:327.15px;font-size:14px;color:#0052cc;font-weight:400;font-style:normal;letter-spacing:-0.051px;">Stop watching this</div>
<div class="t" style="left:1398px;top:347.15px;font-size:14px;color:#0052cc;font-weight:400;font-style:normal;letter-spacing:-0.537px;">issue</div>
<div class="t" style="left:1253px;top:399.15px;font-size:14px;color:#172b4d;font-weight:400;font-style:normal;letter-spacing:-0.256px;-webkit-text-stroke:0.45px #172b4d;">Dates</div>
<div class="t" style="left:1253.2px;top:427.15px;font-size:14px;color:#5e6c84;font-weight:400;font-style:normal;letter-spacing:-0.275px;">Created:</div>
<div class="t" style="left:1398px;top:427.15px;font-size:14px;color:#172b4d;font-weight:400;font-style:normal;letter-spacing:-0.244px;">Just now</div>
<div class="t" style="left:1253.2px;top:452.15px;font-size:14px;color:#5e6c84;font-weight:400;font-style:normal;letter-spacing:0.021px;">Updated:</div>
<div class="t" style="left:1398px;top:452.15px;font-size:14px;color:#172b4d;font-weight:400;font-style:normal;letter-spacing:-0.244px;">Just now</div>
<div class="t" style="left:1253px;top:504.15px;font-size:14px;color:#172b4d;font-weight:400;font-style:normal;letter-spacing:0.172px;-webkit-text-stroke:0.45px #172b4d;">Agile</div>
<div class="t" style="left:1274.4px;top:534.15px;font-size:14px;color:#0052cc;font-weight:400;font-style:normal;letter-spacing:-0.099px;">Find on a board</div>
<div class="t" style="left:1253px;top:589.15px;font-size:14px;color:#172b4d;font-weight:400;font-style:normal;letter-spacing:-0.180px;">Checklists</div>
<div class="t" style="left:1256.6px;top:617.15px;font-size:14px;color:#172b4d;font-weight:700;font-style:normal;letter-spacing:-0.331px;">Bug Testing</div>
<div class="t" style="left:1256.6px;top:642.15px;font-size:14px;color:#172b4d;font-weight:400;font-style:normal;letter-spacing:0.009px;">Testing with environment 1</div>
<div class="t" style="left:1256.6px;top:667.15px;font-size:14px;color:#172b4d;font-weight:400;font-style:normal;letter-spacing:0.009px;">Testing with environment 2</div>
<div class="t" style="left:1256.6px;top:692.15px;font-size:14px;color:#172b4d;font-weight:400;font-style:normal;letter-spacing:0.009px;">Testing with environment 3</div>
<div class="t" style="left:1256.6px;top:717.15px;font-size:14px;color:#172b4d;font-weight:400;font-style:normal;letter-spacing:0.009px;">Testing with environment 4</div>
</body></html>
